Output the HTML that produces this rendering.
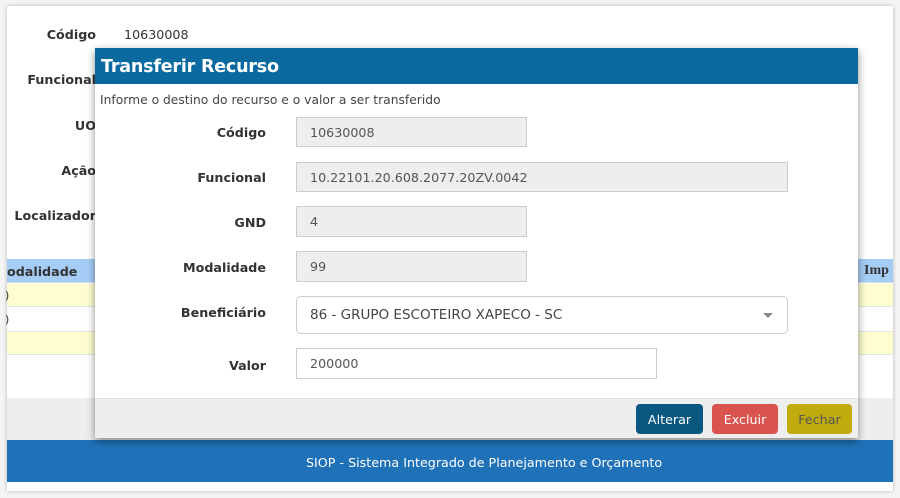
<!DOCTYPE html>
<html><head><meta charset="utf-8"><style>
*{box-sizing:border-box;margin:0;padding:0}
body{width:900px;height:498px;background:#f4f4f4;font-family:"DejaVu Sans","Liberation Sans",sans-serif;font-size:12.7px;color:#333;position:relative;overflow:hidden}
.page{position:absolute;left:7px;top:6px;width:886px;height:485px;background:#fff;box-shadow:0 0 4px rgba(0,0,0,.25)}
.a{position:absolute}
.lbl{font-weight:bold;color:#333;text-align:right}
.inp{position:absolute;background:#eee;border:1px solid #ccc;color:#555;padding-left:13px;font-size:12.7px}
.btn{position:absolute;top:404px;height:30px;border-radius:4px;font-size:12.7px;text-align:center;line-height:31px}
</style></head><body>
<div class="page"></div>
<div class="a lbl" style="left:30px;top:27px;width:66px">Código</div>
<div class="a" style="left:124px;top:27px">10630008</div>
<div class="a lbl" style="left:20px;top:72px;width:76px">Funcional</div>
<div class="a lbl" style="left:40px;top:118px;width:56px">UO</div>
<div class="a lbl" style="left:40px;top:163px;width:56px">Ação</div>
<div class="a lbl" style="left:6px;top:208px;width:90px">Localizador</div>
<div class="a" style="left:7px;top:259px;width:886px;height:24px;background:#a5cdf6;border-bottom:1px solid #ddd"></div>
<div class="a" style="left:7px;top:264px;font-weight:bold">odalidade</div>
<div class="a" style="left:864px;top:263px;font-weight:bold;font-family:'Liberation Serif',serif;font-size:14px">Imp</div>
<div class="a" style="left:7px;top:284px;width:886px;height:23px;background:#fdfdd0;border-bottom:1px solid #e4e4e4"></div>
<div class="a" style="left:7px;top:331px;width:886px;height:24px;background:#fdfdd0;border-top:1px solid #e4e4e4;border-bottom:1px solid #e4e4e4"></div>
<div class="a" style="left:5px;top:289px;font-size:11px">)</div>
<div class="a" style="left:5px;top:313px;font-size:11px">)</div>
<div class="a" style="left:7px;top:398px;width:886px;height:42px;background:#eee"></div>
<div class="a" style="left:7px;top:440px;width:886px;height:42px;background:#1f72b8"></div>
<div class="a" style="left:306px;top:455px;color:#fff">SIOP - Sistema Integrado de Planejamento e Orçamento</div>

<div class="a" style="left:95px;top:48px;width:763px;height:390px;background:#fff;box-shadow:0 3px 8px rgba(0,0,0,.45)">
 <div style="height:36px;background:#0a6a9f;color:#fff;font-weight:bold;font-size:17.5px;padding-left:6px;line-height:38px;letter-spacing:-0.2px">Transferir Recurso</div>
 <div style="position:absolute;left:5px;top:45px;color:#444;font-size:12.3px">Informe o destino do recurso e o valor a ser transferido</div>
 <div style="position:absolute;left:0;bottom:0;width:100%;height:40px;background:#eee;border-top:1px solid #e2e2e2"></div>
</div>
<div class="a lbl" style="left:160px;top:125px;width:106px">Código</div>
<div class="inp" style="left:296px;top:117px;width:231px;height:30px;line-height:29px">10630008</div>
<div class="a lbl" style="left:160px;top:170px;width:106px">Funcional</div>
<div class="inp" style="left:296px;top:162px;width:492px;height:30px;line-height:29px">10.22101.20.608.2077.20ZV.0042</div>
<div class="a lbl" style="left:160px;top:215px;width:106px">GND</div>
<div class="inp" style="left:296px;top:206px;width:231px;height:31px;line-height:30px">4</div>
<div class="a lbl" style="left:160px;top:260px;width:106px">Modalidade</div>
<div class="inp" style="left:296px;top:251px;width:231px;height:31px;line-height:30px">99</div>
<div class="a lbl" style="left:150px;top:305px;width:116px">Beneficiário</div>
<div class="inp" style="left:296px;top:296px;width:492px;height:38px;line-height:37px;background:#fff;border-radius:5px;color:#444;font-size:13.5px">86 - GRUPO ESCOTEIRO XAPECO - SC
 <span style="position:absolute;right:14px;top:16px;width:0;height:0;border-left:5px solid transparent;border-right:5px solid transparent;border-top:5px solid #888"></span></div>
<div class="a lbl" style="left:160px;top:358px;width:106px">Valor</div>
<div class="inp" style="left:296px;top:348px;width:361px;height:31px;line-height:30px;background:#fff">200000</div>
<div class="btn" style="left:636px;width:67px;background:#07577f;color:#fff">Alterar</div>
<div class="btn" style="left:712px;width:66px;background:#d9534f;color:#fff">Excluir</div>
<div class="btn" style="left:787px;width:65px;background:#bfab0b;color:#555">Fechar</div>
</body></html>
